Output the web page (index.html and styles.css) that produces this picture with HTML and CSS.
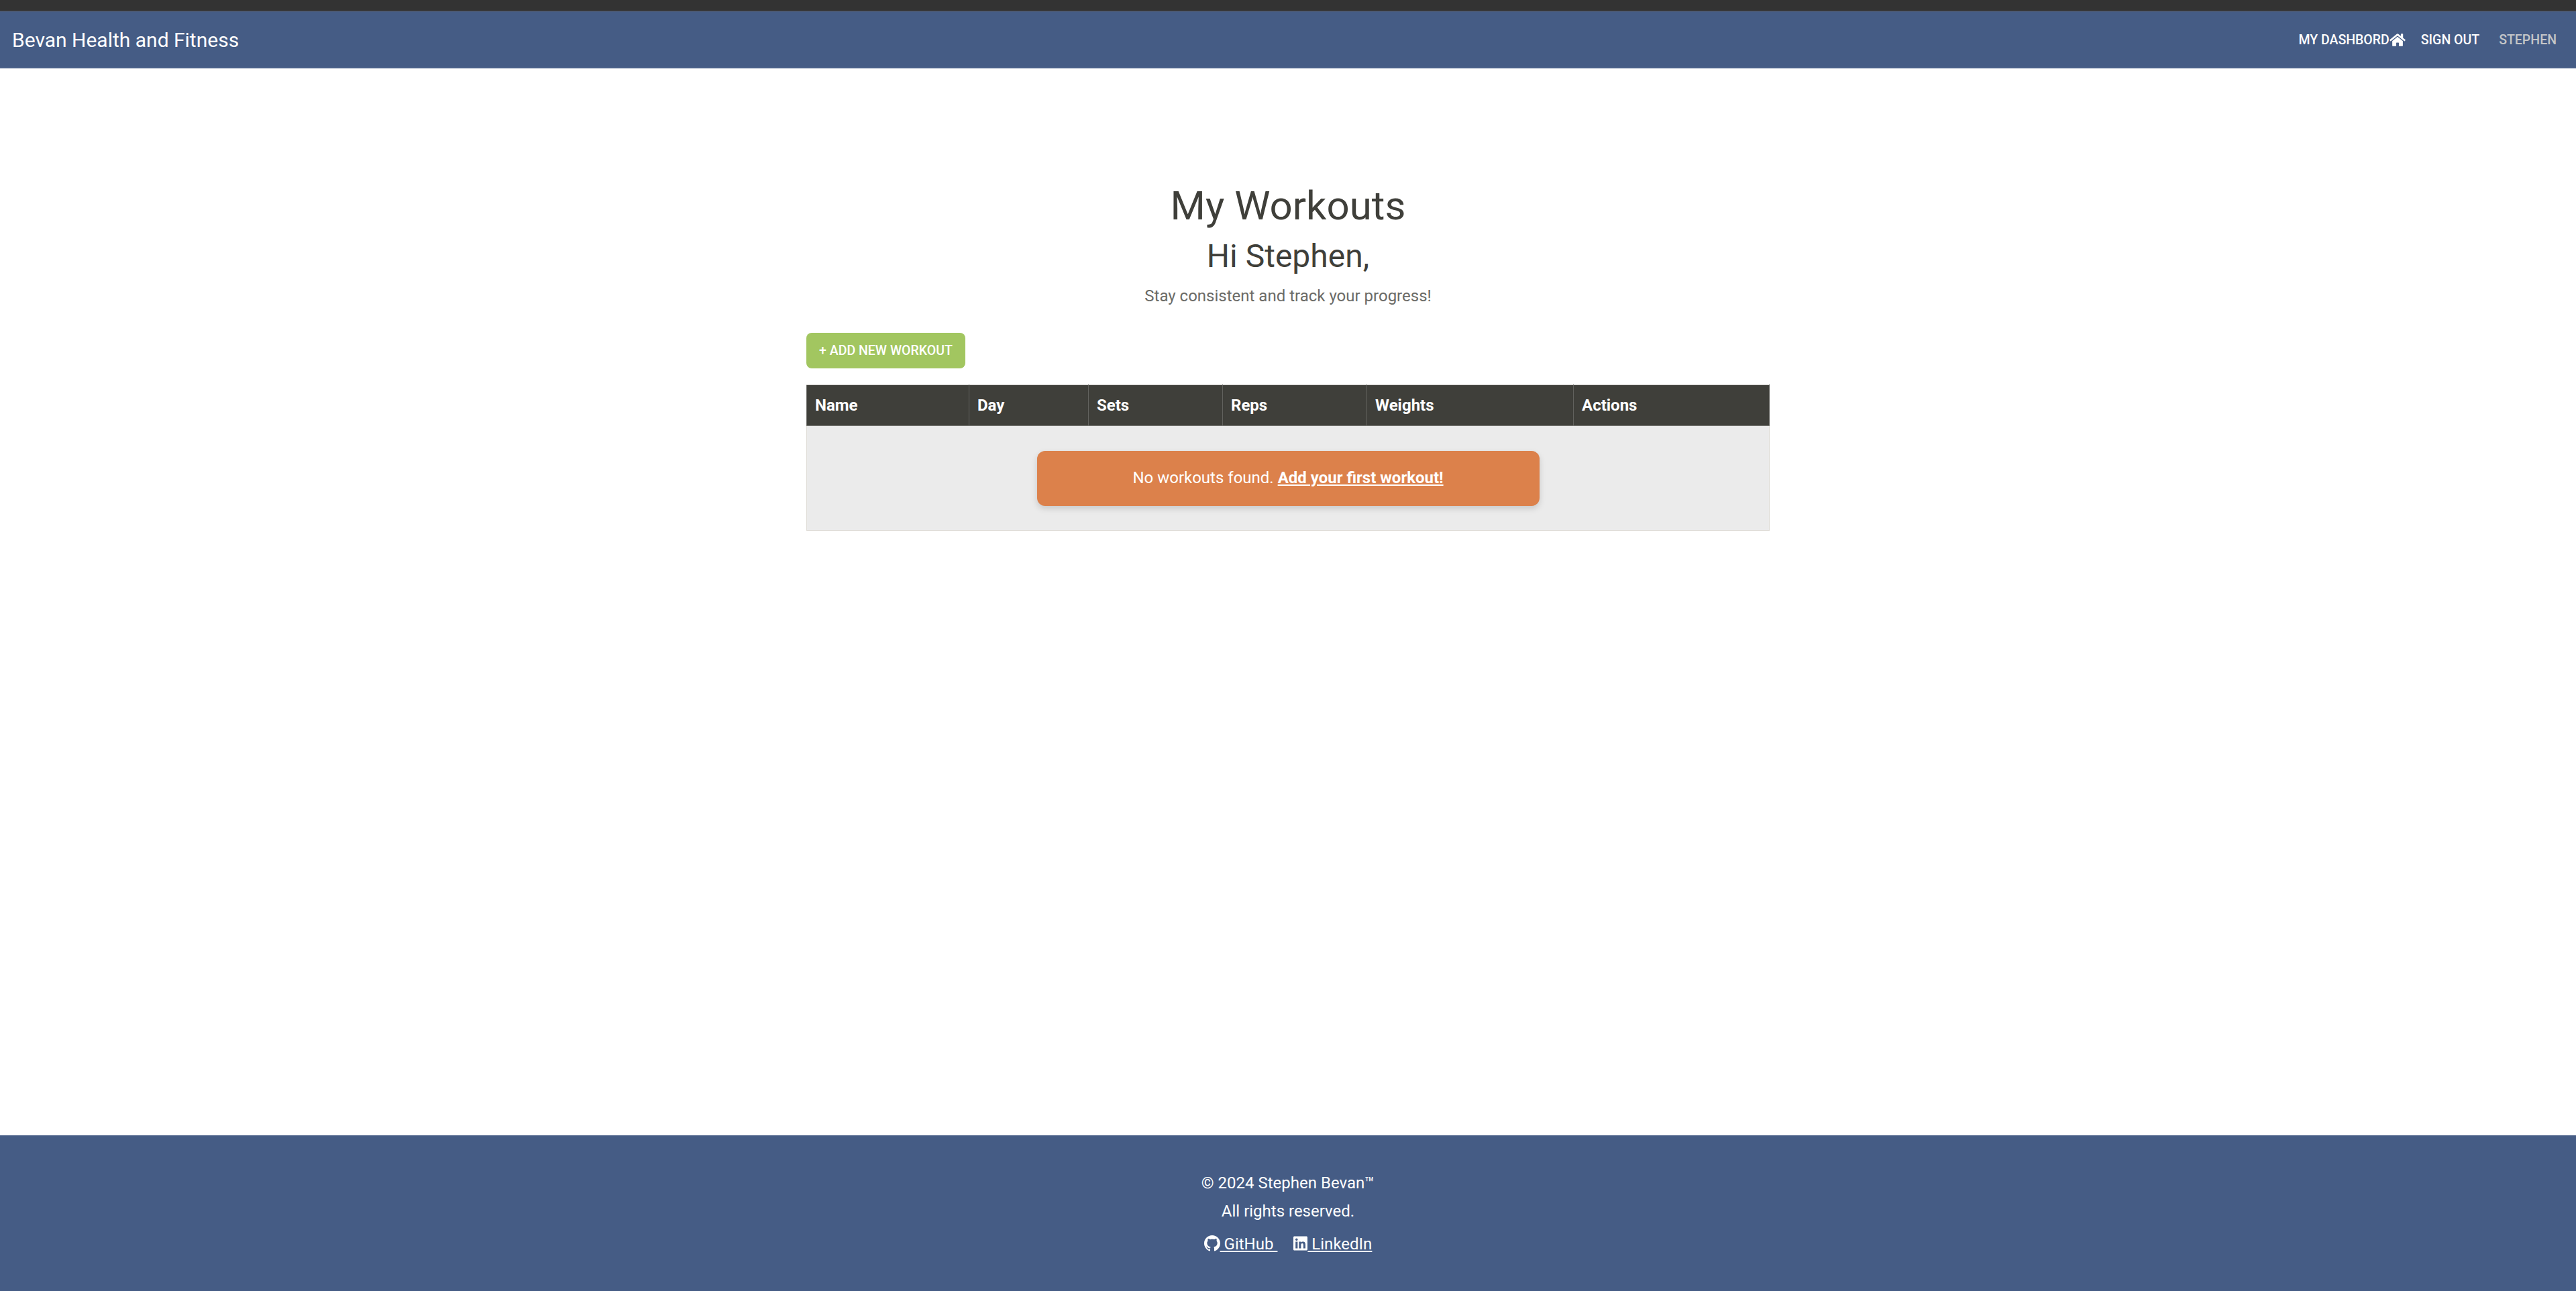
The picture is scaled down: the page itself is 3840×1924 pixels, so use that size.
FILE: index.html
```html
<!DOCTYPE html>
<html lang="en">
<head>
    <meta charset="UTF-8">
    <meta name="viewport" content="width=device-width, initial-scale=1.0">
    <title>My Workouts</title>
    <link rel="stylesheet" href="styles.css">
</head>
<body>
  <div class="topbar"></div>
  <nav class="navbar">
      <a class="brand" href="#">Bevan Health and Fitness</a>
      <ul class="nav-links">
          <li><a href="#">My Dashbord<svg class="home-icon" viewBox="0 0 576 512"><path d="M280.37 148.26L96 300.11V464a16 16 0 0 0 16 16l112.06-.29a16 16 0 0 0 15.92-16V368a16 16 0 0 1 16-16h64a16 16 0 0 1 16 16v95.64a16 16 0 0 0 16 16.05L464 480a16 16 0 0 0 16-16V300L295.67 148.26a12.19 12.19 0 0 0-15.3 0zM571.6 251.47L488 182.56V44.05a12 12 0 0 0-12-12h-56a12 12 0 0 0-12 12v72.61L318.47 43a48 48 0 0 0-61 0L4.34 251.47a12 12 0 0 0-1.6 16.9l25.5 31A12 12 0 0 0 45.15 301l235.22-193.74a12.19 12.19 0 0 1 15.3 0L530.9 301a12 12 0 0 0 16.9-1.6l25.5-31a12 12 0 0 0-1.7-16.93z"/></svg></a></li>
          <li><a href="#">Sign Out</a></li>
          <li class="nav-user">Stephen</li>
      </ul>
  </nav>

  <main class="content">
      <h1>My Workouts</h1>
      <h2>Hi Stephen,</h2>
      <p class="lead">Stay consistent and track your progress!</p>
      <a class="btn-add" href="#">+ Add New Workout</a>
      <table class="workouts">
          <colgroup>
              <col class="col-name">
              <col class="col-day">
              <col class="col-sets">
              <col class="col-reps">
              <col class="col-weights">
              <col class="col-actions">
          </colgroup>
          <thead>
              <tr>
                  <th>Name</th>
                  <th>Day</th>
                  <th>Sets</th>
                  <th>Reps</th>
                  <th>Weights</th>
                  <th>Actions</th>
              </tr>
          </thead>
          <tbody>
              <tr>
                  <td colspan="6">
                      <div class="alert">No workouts found. <a href="#">Add your first workout!</a></div>
                  </td>
              </tr>
          </tbody>
      </table>
  </main>

  <footer class="footer">
      <p>© 2024 Stephen Bevan™</p>
      <p>All rights reserved.</p>
      <p class="social">
          <a href="#"><svg class="social-icon" viewBox="0 0 16 16"><path d="M8 0C3.58 0 0 3.58 0 8c0 3.54 2.29 6.53 5.47 7.59.4.07.55-.17.55-.38 0-.19-.01-.82-.01-1.49-2.01.37-2.53-.49-2.69-.94-.09-.23-.48-.94-.82-1.13-.28-.15-.68-.52-.01-.53.63-.01 1.08.58 1.23.82.72 1.21 1.87.87 2.33.66.07-.52.28-.87.51-1.07-1.78-.2-3.64-.89-3.64-3.95 0-.87.31-1.59.82-2.15-.08-.2-.36-1.02.08-2.12 0 0 .67-.21 2.2.82.64-.18 1.32-.27 2-.27s1.36.09 2 .27c1.53-1.04 2.2-.82 2.2-.82.44 1.1.16 1.92.08 2.12.51.56.82 1.27.82 2.15 0 3.07-1.87 3.75-3.65 3.95.29.25.54.73.54 1.48 0 1.07-.01 1.93-.01 2.2 0 .21.15.46.55.38A8.01 8.01 0 0 0 16 8c0-4.42-3.58-8-8-8z"/></svg> GitHub&nbsp;</a>
          <a href="#"><svg class="social-icon icon-linkedin" viewBox="0 0 448 512"><path d="M416 32H31.9C14.3 32 0 46.5 0 64.3v383.4C0 465.5 14.3 480 31.9 480H416c17.6 0 32-14.5 32-32.3V64.3c0-17.8-14.4-32.3-32-32.3zM135.4 416H69V202.2h66.5V416zm-33.2-243c-21.3 0-38.5-17.3-38.5-38.5S80.9 96 102.2 96c21.2 0 38.5 17.3 38.5 38.5 0 21.3-17.2 38.5-38.5 38.5zm282.1 243h-66.4V312c0-24.8-.5-56.7-34.5-56.7-34.6 0-39.9 27-39.9 54.9V416h-66.4V202.2h63.7v29.2h.9c8.9-16.8 30.6-27.3 62.9-27.3 67.2 0 79.7 44.3 79.7 101.9V416z"/></svg> LinkedIn</a>
      </p>
  </footer>
</body>
</html>
```

FILE: styles.css
```css
* {
    box-sizing: border-box;
}

body {
    margin: 0;
    min-height: 100vh;
    display: flex;
    flex-direction: column;
    font-family: Roboto, "Liberation Sans", sans-serif;
    color: #3f3f3a;
    background: #fff;
}

a {
    color: inherit;
}

.topbar {
    height: 17px;
    background: #333;
    border-bottom: 1px solid #555;
}

.navbar {
    height: 85px;
    display: flex;
    align-items: center;
    justify-content: space-between;
    padding: 0 29px 0 18px;
    background: #455c85;
    border-bottom: 1px solid #7184a5;
    color: #fff;
}

.brand {
    font-size: 30px;
    text-decoration: none;
}

.nav-links {
    display: flex;
    gap: 23px;
    margin: 0;
    padding: 0;
    list-style: none;
    font-size: 19.5px;
    font-weight: 500;
    text-transform: uppercase;
}

.nav-links a {
    display: flex;
    align-items: center;
    text-decoration: none;
}

.home-icon {
    width: 24px;
    height: 21px;
    fill: #fff;
}

.nav-user {
    color: #c4c6c8;
    margin-left: 6px;
}

.content {
    flex: 1;
    width: 1436px;
    margin: 0 auto;
    padding-top: 166px;
    text-align: center;
}

h1 {
    margin: 0;
    font-size: 60px;
    font-weight: 400;
    line-height: 78px;
}

h2 {
    margin: 0;
    font-size: 48px;
    font-weight: 400;
    line-height: 72px;
}

.lead {
    margin: 5px 0 37px;
    font-size: 24px;
    line-height: 36px;
    color: #6b6b67;
}

.btn-add {
    display: block;
    width: 237px;
    height: 53px;
    margin-bottom: 24px;
    border-radius: 8px;
    background: #a2c660;
    color: #fff;
    font-size: 19.5px;
    font-weight: 500;
    line-height: 53px;
    text-decoration: none;
    text-transform: uppercase;
}

.workouts {
    width: 100%;
    table-layout: fixed;
    border-collapse: collapse;
    text-align: left;
}

.col-name { width: 242px; }
.col-day { width: 178px; }
.col-sets { width: 200px; }
.col-reps { width: 215px; }
.col-weights { width: 308px; }

.workouts th {
    height: 61px;
    padding: 0 12px;
    background: #3f3f3a;
    border: 1px solid #62625e;
    border-top-color: #cfcdc9;
    border-bottom-color: #7d7d78;
    color: #fff;
    font-size: 24px;
    font-weight: 700;
}

.workouts td {
    height: 156px;
    padding: 0;
    background: #ebebeb;
    border: 1px solid #dedbd6;
    border-top: none;
    vertical-align: middle;
}

.alert {
    width: 749px;
    height: 82px;
    margin: 0 auto;
    border-radius: 12px;
    background: #dc814b;
    box-shadow: 0 4px 10px rgba(0, 0, 0, 0.15);
    color: #fff;
    font-size: 24px;
    line-height: 81px;
    text-align: center;
}

.alert a {
    font-weight: 700;
}

.footer {
    height: 232px;
    padding-top: 50px;
    background: #455c85;
    color: #fff;
    font-size: 24px;
    text-align: center;
}

.footer p {
    margin: 0;
    line-height: 42px;
}

.footer .social {
    display: flex;
    justify-content: center;
    gap: 24px;
    margin-top: 7px;
}

.social-icon {
    width: 24px;
    height: 24px;
    fill: #fff;
    vertical-align: -3px;
}

.icon-linkedin {
    width: 21px;
}
```
